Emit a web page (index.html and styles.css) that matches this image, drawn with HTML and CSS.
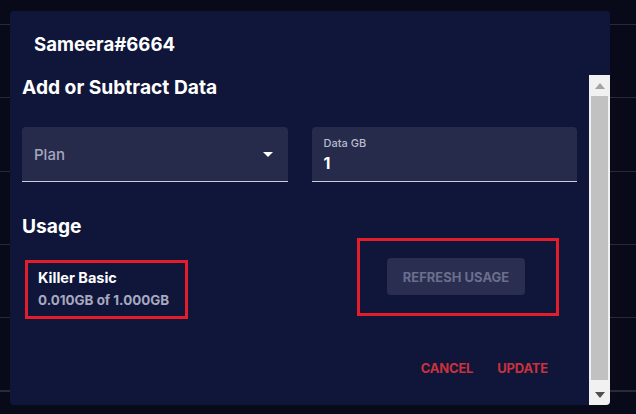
FILE: index.html
```html
<!DOCTYPE html>
<html>
<head>
<meta charset="utf-8">
<link rel="stylesheet" href="styles.css">
</head>
<body>
<div class="dialog">
  <div class="dialog-header">
    <h2 class="dialog-title">Sameera#6664</h2>
  </div>
  <div class="dialog-body">
    <div class="content">
      <h3 class="section-title">Add or Subtract Data</h3>
      <div class="fields">
        <div class="field select-field">
          <span class="placeholder">Plan</span>
          <svg class="caret" width="10" height="5" viewBox="0 0 10 5"><path d="M0 0 L10 0 L5 5 Z" fill="#ffffff"/></svg>
        </div>
        <div class="field input-field">
          <span class="field-label">Data GB</span>
          <span class="field-value">1</span>
        </div>
      </div>
      <h3 class="section-title usage-title">Usage</h3>
      <div class="usage-row">
        <div class="plan-box">
          <div class="plan-name">Killer Basic</div>
          <div class="plan-usage">0.010GB of 1.000GB</div>
        </div>
        <div class="refresh-box">
          <button class="refresh-btn">REFRESH USAGE</button>
        </div>
      </div>
      <div class="actions">
        <button class="text-btn">CANCEL</button>
        <button class="text-btn">UPDATE</button>
      </div>
    </div>
    <div class="scrollbar">
      <div class="sb-arrow"><svg width="10" height="6" viewBox="0 0 10 6"><path d="M0 6 L5 0 L10 6 Z" fill="#a3a3a3"/></svg></div>
      <div class="sb-thumb"></div>
      <div class="sb-arrow sb-down"><svg width="10" height="6" viewBox="0 0 10 6"><path d="M0 0 L10 0 L5 6 Z" fill="#505050"/></svg></div>
    </div>
  </div>
</div>
</body>
</html>
```
FILE: styles.css
```css
* { box-sizing: border-box; }
html, body { margin: 0; padding: 0; }
body {
  width: 636px;
  height: 414px;
  overflow: hidden;
  background-color: #080a1a;
  background-image: repeating-linear-gradient(to bottom, transparent 0, transparent 24px, #262a3a 24px, #262a3a 25px, transparent 25px, transparent 73.3px);
  font-family: Inter, "Liberation Sans", sans-serif;
  padding: 11px 26px 9px 10px;
}
.dialog {
  width: 600px;
  height: 394px;
  background: #10163a;
  border-radius: 4px;
  overflow: hidden;
  display: flex;
  flex-direction: column;
}
.dialog-header {
  height: 64px;
  padding: 22px 24px 0;
}
.dialog-title {
  margin: 0;
  color: #ffffff;
  font-size: 18.6px;
  font-weight: 700;
  line-height: 22px;
}
.dialog-body {
  flex: 1;
  display: flex;
  min-height: 0;
}
.content {
  flex: 1;
  padding: 0 12px;
  display: flex;
  flex-direction: column;
}
.section-title {
  margin: 0;
  color: #ffffff;
  font-size: 19.2px;
  font-weight: 700;
  line-height: 22px;
}
.content > .section-title:first-child { margin-top: 1px; }
.fields {
  display: grid;
  grid-template-columns: 1fr 1fr;
  gap: 24px;
  margin-top: 29px;
}
.field {
  height: 55px;
  background: #262a4b;
  border-radius: 4px 4px 0 0;
  border-bottom: 1px solid #c9cbe0;
  padding: 0 12px;
}
.select-field {
  display: flex;
  align-items: center;
  justify-content: space-between;
  padding-right: 15px;
}
.placeholder {
  color: #a4a7bd;
  font-size: 15px;
  font-weight: 500;
}
.caret { display: block; }
.input-field {
  display: flex;
  flex-direction: column;
  padding-top: 9px;
}
.field-label {
  color: #b9bbcf;
  font-size: 11px;
  font-weight: 500;
  line-height: 14px;
}
.field-value {
  color: #ffffff;
  font-size: 16px;
  font-weight: 700;
  line-height: 20px;
  margin-top: 3px;
}
.usage-title { margin-top: 33px; }
.usage-row {
  display: flex;
  align-items: flex-start;
  margin-top: 1px;
}
.plan-box {
  margin-top: 22px;
  margin-left: 3px;
  width: 163px;
  height: 59px;
  border: 3px solid #e31e2a;
  padding: 6px 0 0 10px;
}
.plan-name {
  color: #ffffff;
  font-size: 14.5px;
  font-weight: 700;
  line-height: 18px;
}
.plan-usage {
  color: #a6a9bf;
  font-size: 13.4px;
  font-weight: 700;
  line-height: 18px;
  margin-top: 4px;
}
.refresh-box {
  margin-left: 169px;
  width: 202px;
  height: 78px;
  border: 3px solid #e31e2a;
  padding: 17px 0 0 27px;
}
.refresh-btn {
  width: 138px;
  height: 37px;
  border: 0;
  border-radius: 4px;
  background: #2a2e50;
  color: #6b6f8e;
  font-family: Inter, "Liberation Sans", sans-serif;
  font-size: 13px;
  font-weight: 700;
  padding: 0;
}
.actions {
  display: flex;
  justify-content: flex-end;
  gap: 24px;
  margin-top: 41px;
  padding-right: 29px;
}
.text-btn {
  background: none;
  border: 0;
  padding: 0;
  color: #c9323c;
  font-family: Inter, "Liberation Sans", sans-serif;
  font-size: 13px;
  font-weight: 700;
  letter-spacing: -0.2px;
  line-height: 16px;
}
.scrollbar {
  width: 21px;
  background: #f1f1f1;
  display: flex;
  flex-direction: column;
  padding: 0 2px;
}
.sb-arrow {
  height: 21px;
  display: flex;
  align-items: center;
  justify-content: center;
}
.sb-thumb {
  flex: 1;
  background: #c1c1c1;
  margin: 0 0 4px;
}
.sb-down { height: 21px; }
```
